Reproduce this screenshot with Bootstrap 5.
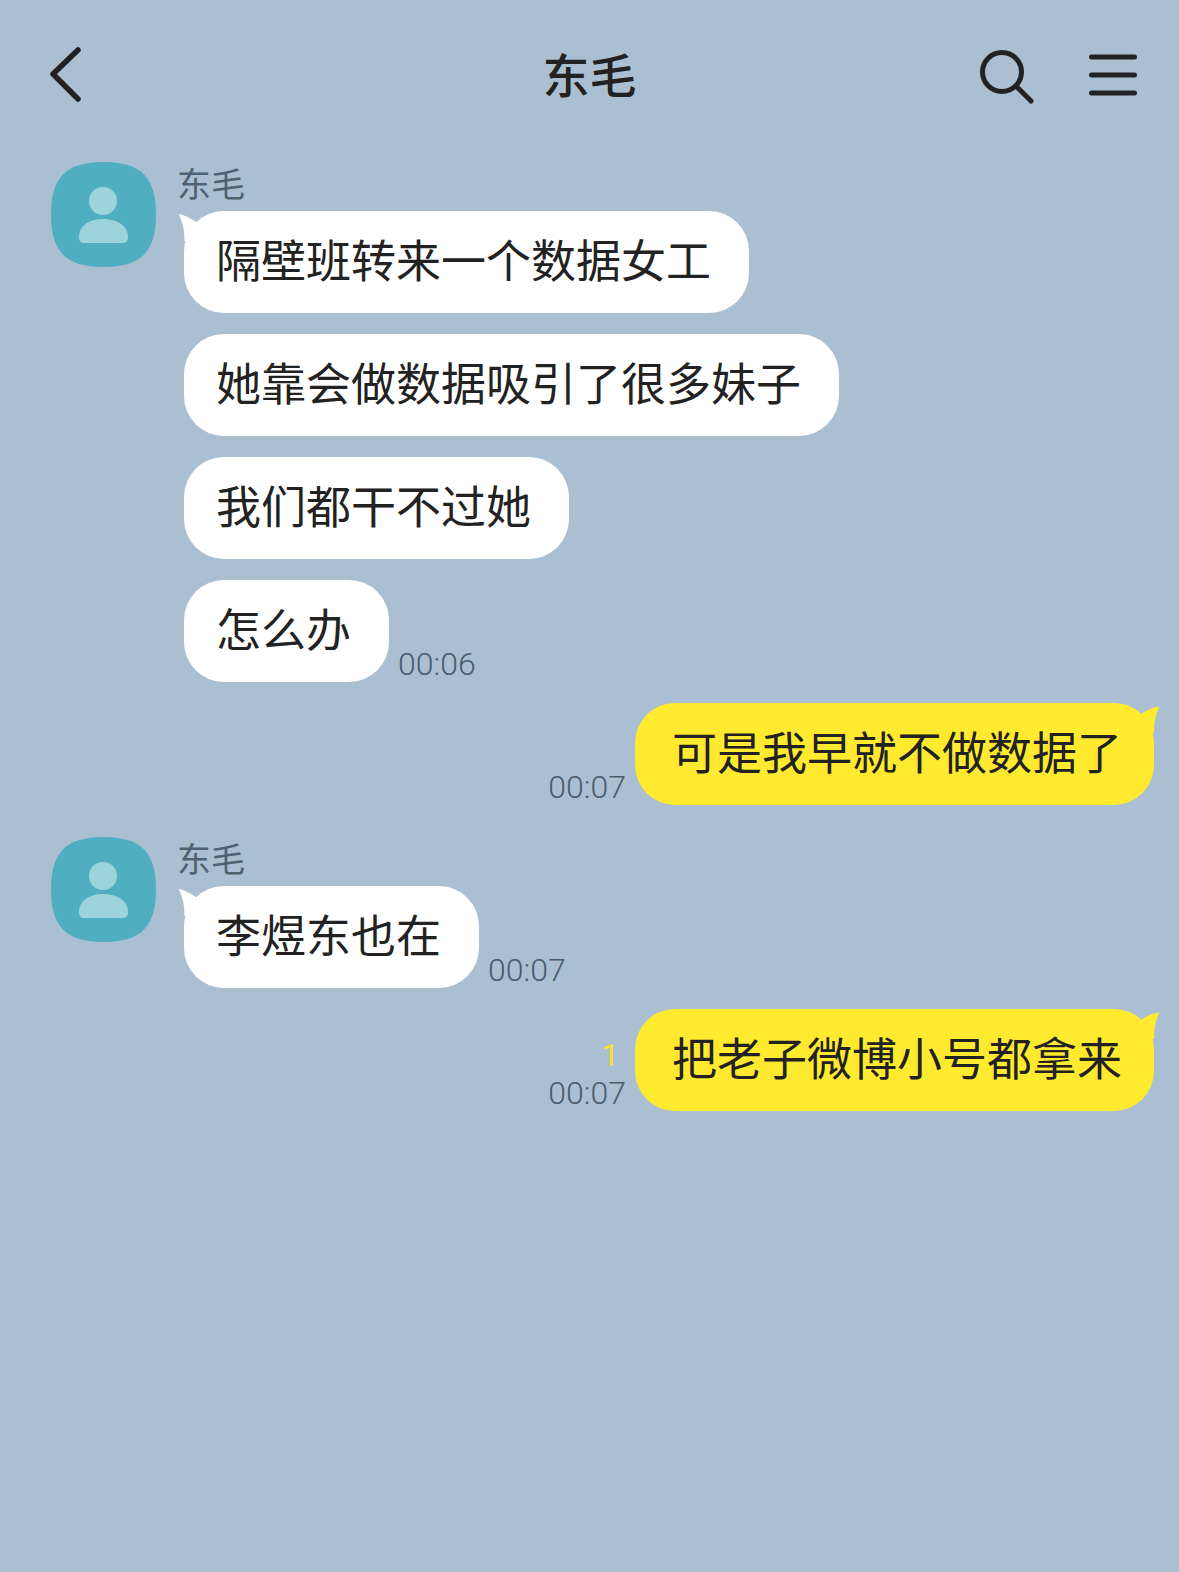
<!DOCTYPE html>
<html lang="zh-CN">
<head>
  <meta charset="UTF-8" />
  <meta name="viewport" content="width=device-width, initial-scale=1.0"/>
  <title>东毛</title>
  <link href="https://cdn.jsdelivr.net/npm/bootstrap@5.3.0/dist/css/bootstrap.min.css" rel="stylesheet"/>
  <style>
    body {
      background-color: #abbfd2;
      font-family: "Noto Sans CJK SC", "Liberation Sans", sans-serif;
      color: #222;
      min-height: 1572px;
    }
    .chat-head {
      height: 150px;
      padding: 0 42px 0 50px;
    }
    .chat-title {
      font-size: 47px;
      font-weight: 500;
      line-height: 1;
      margin-top: -6px;
    }
    .head-side {
      width: 200px;
    }
    .head-left {
      width: 192px;
    }
    .head-icons {
      gap: 55px;
    }
    .icon-search {
      margin-top: 4px;
    }
    .chat-body {
      padding: 12px 25px 0 51px;
    }
    .avatar-box {
      width: 105px;
      height: 105px;
      flex: none;
    }
    .msg-col {
      margin-left: 21px;
    }
    .sender {
      font-size: 34px;
      line-height: 42px;
      margin-bottom: 7px;
      color: #4f6272;
    }
    .bubble {
      position: relative;
      height: 102px;
      border-radius: 40px;
      font-size: 45px;
      line-height: 96px;
      white-space: nowrap;
    }
    .bubble-in {
      background: #fff;
      padding: 0 38px 0 32px;
      margin-left: 7px;
    }
    .bubble-out {
      background: #ffea30;
      padding: 0 32px 0 37px;
    }
    .tail-in {
      position: absolute;
      left: -6px;
      top: 0;
    }
    .tail-out {
      position: absolute;
      right: -6px;
      top: 0;
    }
    .msg-time {
      font-family: Roboto, "Liberation Sans", sans-serif;
      font-weight: 300;
      font-size: 32px;
      line-height: 32px;
      padding-bottom: 2px;
      color: #4a5d6d;
      white-space: nowrap;
    }
    .unread {
      font-family: Roboto, "Liberation Sans", sans-serif;
      font-weight: 400;
      font-size: 31px;
      line-height: 30px;
      margin-bottom: 6px;
      padding-right: 7px;
      color: #f5e42c;
      text-align: right;
    }
    .gap-msg {
      gap: 21px;
    }
    .gap-time {
      gap: 9px;
    }
    .group-two {
      padding-top: 11px;
    }
  </style>
</head>
<body>
  <!-- Header -->
  <div class="chat-head d-flex align-items-center justify-content-between">
    <div class="head-left">
      <svg class="d-block" width="31" height="56" viewBox="0 0 31 56" fill="none" stroke="#222" stroke-width="5.500" stroke-linecap="round" stroke-linejoin="round"><path d="M28 3 L3 27 L28 52"/></svg>
    </div>
    <div class="chat-title">东毛</div>
    <div class="head-side d-flex align-items-center justify-content-end head-icons">
      <svg class="d-block icon-search" width="54" height="54" viewBox="0 0 54 54" fill="none" stroke="#222" stroke-width="5" stroke-linecap="round"><circle cx="22" cy="22" r="19.500"/><path d="M37 37 L51 51"/></svg>
      <svg class="d-block" width="48" height="42" viewBox="0 0 48 42" fill="none" stroke="#222" stroke-width="5" stroke-linecap="round"><path d="M2.500 3 H45.500 M2.500 21 H45.500 M2.500 39 H45.500"/></svg>
    </div>
  </div>

  <div class="chat-body d-flex flex-column gap-msg">
    <!-- Incoming group 1 -->
    <div class="d-flex align-items-start">
      <svg class="avatar-box" viewBox="0 0 105 105"><path d="M52.500 0 C90 0 105 15 105 52.500 C105 90 90 105 52.500 105 C15 105 0 90 0 52.500 C0 15 15 0 52.500 0 Z" fill="#4fafc0"/><circle cx="52" cy="39" r="14" fill="#9dd4dc"/><path d="M28 75 C28 64 38 57 52 57 C66 57 77 64 77 75 C77 79 75 81 71 81 H33 C30 81 28 79 28 75 Z" fill="#9dd4dc"/></svg>
      <div class="msg-col d-flex flex-column align-items-start gap-msg">
        <div class="d-flex flex-column align-items-start">
          <div class="sender">东毛</div>
          <div class="bubble bubble-in">
            <svg class="tail-in" width="30" height="30" viewBox="0 0 30 30"><path d="M0.500 3 C7 4 12 7 18 11 L18 30 L6.500 30 C6.500 20 5 11 0.500 3 Z" fill="#fff"/></svg>
            <span class="position-relative">隔壁班转来一个数据女工</span>
          </div>
        </div>
        <div class="bubble bubble-in">她靠会做数据吸引了很多妹子</div>
        <div class="bubble bubble-in">我们都干不过她</div>
        <div class="d-flex align-items-end gap-time">
          <div class="bubble bubble-in">怎么办</div>
          <div class="msg-time">00:06</div>
        </div>
      </div>
    </div>

    <!-- Outgoing 1 -->
    <div class="d-flex align-items-end justify-content-end gap-time">
      <div class="msg-time">00:07</div>
      <div class="bubble bubble-out">
        <svg class="tail-out" width="30" height="30" viewBox="0 0 30 30"><path d="M29.500 3.500 C23 4 17 7 11 11 L11 30 L24 30 C24 20 25.500 11 29.500 3.500 Z" fill="#ffea30"/></svg>
        <span class="position-relative">可是我早就不做数据了</span>
      </div>
    </div>

    <!-- Incoming group 2 -->
    <div class="d-flex align-items-start group-two">
      <svg class="avatar-box" viewBox="0 0 105 105"><path d="M52.500 0 C90 0 105 15 105 52.500 C105 90 90 105 52.500 105 C15 105 0 90 0 52.500 C0 15 15 0 52.500 0 Z" fill="#4fafc0"/><circle cx="52" cy="39" r="14" fill="#9dd4dc"/><path d="M28 75 C28 64 38 57 52 57 C66 57 77 64 77 75 C77 79 75 81 71 81 H33 C30 81 28 79 28 75 Z" fill="#9dd4dc"/></svg>
      <div class="msg-col d-flex flex-column align-items-start">
        <div class="sender">东毛</div>
        <div class="d-flex align-items-end gap-time">
          <div class="bubble bubble-in">
            <svg class="tail-in" width="30" height="30" viewBox="0 0 30 30"><path d="M0.500 3 C7 4 12 7 18 11 L18 30 L6.500 30 C6.500 20 5 11 0.500 3 Z" fill="#fff"/></svg>
            <span class="position-relative">李煜东也在</span>
          </div>
          <div class="msg-time">00:07</div>
        </div>
      </div>
    </div>

    <!-- Outgoing 2 -->
    <div class="d-flex align-items-end justify-content-end gap-time">
      <div>
        <div class="unread">1</div>
        <div class="msg-time">00:07</div>
      </div>
      <div class="bubble bubble-out">
        <svg class="tail-out" width="30" height="30" viewBox="0 0 30 30"><path d="M29.500 3.500 C23 4 17 7 11 11 L11 30 L24 30 C24 20 25.500 11 29.500 3.500 Z" fill="#ffea30"/></svg>
        <span class="position-relative">把老子微博小号都拿来</span>
      </div>
    </div>
  </div>

  <script src="https://cdn.jsdelivr.net/npm/bootstrap@5.3.0/dist/js/bootstrap.bundle.min.js"></script>
</body>
</html>
